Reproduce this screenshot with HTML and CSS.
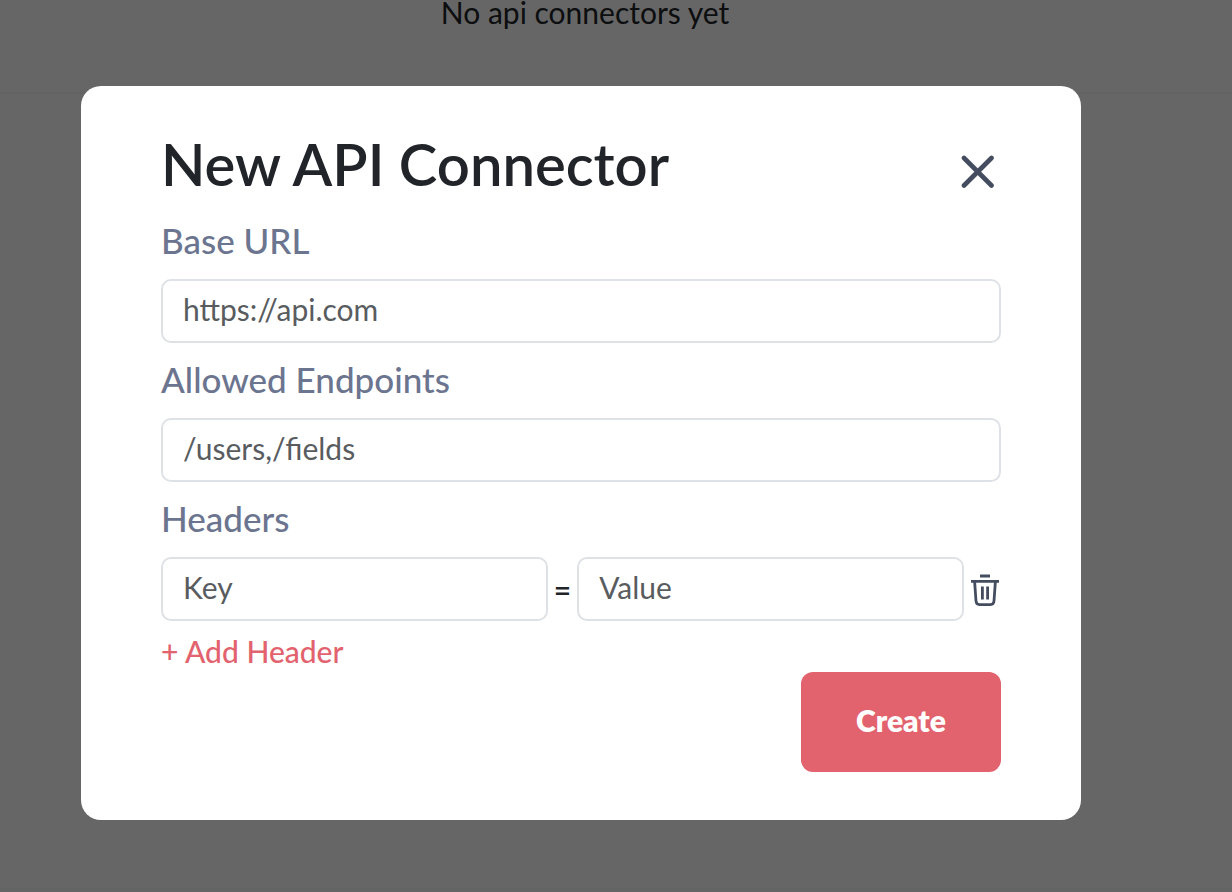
FILE: index.html
```
<!DOCTYPE html>
<html lang="en">
<head>
  <meta charset="UTF-8" />
  <title>New API Connector</title>
  <meta name="viewport" content="width=device-width, initial-scale=1.0" />
  <link rel="stylesheet" href="styles.css">
</head>
<body>
  <main class="page">
    <section class="connectors">
      <p>No api connectors yet</p>
    </section>
    <section class="panel"></section>
  </main>

  <div class="overlay">
    <div class="modal" role="dialog" aria-modal="true" aria-labelledby="modal-title">
      <div class="modal-header">
        <h1 id="modal-title">New API Connector</h1>
        <button type="button" class="icon-button close" aria-label="Close">
          <svg width="34" height="34" viewBox="0 0 34 34" fill="none" stroke="currentColor" stroke-width="4.6" stroke-linecap="round">
            <path d="M3 3L30.5 30.5M30.5 3L3 30.5" />
          </svg>
        </button>
      </div>

      <form>
        <label for="base-url">Base URL</label>
        <input type="text" id="base-url" placeholder="https://api.com" />

        <label for="endpoints">Allowed Endpoints</label>
        <input type="text" id="endpoints" placeholder="/users,/fields" />

        <label for="header-key">Headers</label>
        <div class="header-row">
          <input type="text" id="header-key" placeholder="Key" />
          <span class="equals">=</span>
          <input type="text" placeholder="Value" aria-label="Header value" />
          <button type="button" class="icon-button" aria-label="Delete header">
            <svg width="31" height="34" viewBox="0 0 31 34" fill="none" stroke="currentColor" stroke-width="2.8" stroke-linejoin="round">
              <path d="M10 4H20M1 9.4H29" />
              <path d="M4.6 9.4L6 29Q6.300 32.600 9.500 32.600H20.500Q23.700 32.600 24 29L25.400 9.400" />
              <path d="M12.400 14.500V27.500M17.600 14.500V27.500" />
            </svg>
          </button>
        </div>

        <button type="button" class="add-header">+ Add Header</button>
        <button type="submit" class="create">Create</button>
      </form>
    </div>
  </div>
</body>
</html>
```
FILE: styles.css
```
* {
  box-sizing: border-box;
}

body {
  margin: 0;
  font-family: Lato, sans-serif;
  font-size: 30px;
  color: #212529;
  background-color: #ffffff;
}

.page {
  display: flex;
  flex-direction: column;
  min-height: 100vh;
  padding-bottom: 2px;
}

.connectors {
  height: 94px;
  padding-right: 62px;
  border-bottom: 2px solid #f5f8f8;
  text-align: center;
}

.connectors p {
  margin: 0;
  line-height: 24px;
}

.panel {
  flex: 1;
  border-bottom: 2px solid #f5f8f8;
}

.overlay {
  position: fixed;
  inset: 0;
  display: flex;
  justify-content: center;
  align-items: center;
  padding: 14px 70px 0 0;
  background-color: rgba(0, 0, 0, 0.6);
}

.modal {
  width: 100%;
  max-width: 1000px;
  padding: 48px 80px;
  border-radius: 20px;
  background-color: #ffffff;
}

.modal-header {
  display: flex;
  justify-content: space-between;
  align-items: flex-start;
  height: 70px;
}

.modal-header h1 {
  margin: 0;
  font-size: 58px;
  font-weight: 600;
  line-height: 60px;
}

.icon-button {
  display: flex;
  padding: 0;
  border: none;
  background: none;
  color: #444c5f;
  cursor: pointer;
}

.close {
  margin: 21px 6px 0 0;
}

form {
  display: flex;
  flex-direction: column;
}

label {
  padding-bottom: 2px;
  font-size: 35px;
  font-weight: 500;
  line-height: 73px;
  color: #6c758f;
}

input {
  width: 100%;
  min-width: 0;
  height: 64px;
  padding: 0 20px 4px;
  border: 2px solid #dee2e6;
  border-radius: 10px;
  outline: none;
  font-family: inherit;
  font-size: 30px;
}

input::placeholder {
  color: #595c5f;
  opacity: 1;
}

.header-row {
  display: flex;
  align-items: center;
  gap: 6px;
}

.equals {
  font-weight: 600;
}

.add-header {
  align-self: flex-start;
  height: 51px;
  padding: 8px 0 0;
  border: none;
  background: none;
  font-family: inherit;
  font-size: 30px;
  font-weight: 500;
  color: #e2626e;
  cursor: pointer;
}

.create {
  align-self: flex-end;
  width: 200px;
  height: 100px;
  padding: 0 0 4px;
  border: none;
  border-radius: 12px;
  background-color: #e2626e;
  font-family: inherit;
  font-size: 30px;
  font-weight: 800;
  color: #ffffff;
  cursor: pointer;
}
```
